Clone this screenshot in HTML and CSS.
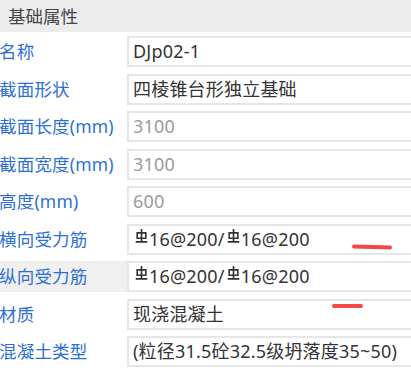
FILE: index.html
```html
<!DOCTYPE html>
<html lang="zh-CN">
<head>
  <meta charset="UTF-8">
  <meta name="viewport" content="width=device-width, initial-scale=1.0">
  <title>基础属性</title>
  <link rel="stylesheet" href="styles.css">
</head>
<body>
  <div class="panel">
    <div class="panel-title">基础属性</div>

    <div class="prop-list">
      <div class="prop-row">
        <div class="prop-name">名称</div>
        <div class="prop-value">DJp02-1</div>
      </div>
      <div class="prop-row">
        <div class="prop-name">截面形状</div>
        <div class="prop-value">四棱锥台形独立基础</div>
      </div>
      <div class="prop-row">
        <div class="prop-name">截面长度(mm)</div>
        <div class="prop-value prop-value--disabled">3100</div>
      </div>
      <div class="prop-row">
        <div class="prop-name">截面宽度(mm)</div>
        <div class="prop-value prop-value--disabled">3100</div>
      </div>
      <div class="prop-row">
        <div class="prop-name">高度(mm)</div>
        <div class="prop-value prop-value--disabled">600</div>
      </div>
      <div class="prop-row">
        <div class="prop-name">横向受力筋</div>
        <div class="prop-value"><svg class="rebar" viewBox="0 0 12 13"><path d="M6 0V12.5M2 3.6H10V8.6H2ZM0.6 12H11.4"/></svg>16@200/<svg class="rebar" viewBox="0 0 12 13"><path d="M6 0V12.5M2 3.6H10V8.6H2ZM0.6 12H11.4"/></svg>16@200</div>
      </div>
      <div class="prop-row prop-row--active">
        <div class="prop-name">纵向受力筋</div>
        <div class="prop-value"><svg class="rebar" viewBox="0 0 12 13"><path d="M6 0V12.5M2 3.6H10V8.6H2ZM0.6 12H11.4"/></svg>16@200/<svg class="rebar" viewBox="0 0 12 13"><path d="M6 0V12.5M2 3.6H10V8.6H2ZM0.6 12H11.4"/></svg>16@200</div>
      </div>
      <div class="prop-row">
        <div class="prop-name">材质</div>
        <div class="prop-value">现浇混凝土</div>
      </div>
      <div class="prop-row">
        <div class="prop-name">混凝土类型</div>
        <div class="prop-value">(粒径31.5砼32.5级坍落度35~50)</div>
      </div>
    </div>

    <span class="mark mark--first"></span>
    <span class="mark mark--second"></span>
  </div>
</body>
</html>
```

FILE: styles.css
```css
body {
  margin: 0;
  padding: 0;
  background: #fff;
  font-family: "Noto Sans", "Noto Sans CJK SC", sans-serif;
  font-size: 17.5px;
  overflow: hidden;
}

.panel {
  position: relative;
  width: 411px;
  height: 374px;
  overflow: hidden;
}

.panel-title {
  height: 32px;
  line-height: 32px;
  padding-left: 8px;
  background: #ececec;
  color: #444;
}

.prop-row {
  display: grid;
  grid-template-columns: 127px 1fr;
  height: 37.5px;
  padding-top: 4px;
  box-sizing: border-box;
}

.prop-name {
  height: 31px;
  line-height: 31px;
  margin-left: -1px;
  color: #2c70d6;
  letter-spacing: 0.2px;
  white-space: nowrap;
}

.prop-row--active .prop-name {
  background: #f0f0f0;
}

.prop-value {
  height: 31px;
  line-height: 27px;
  box-sizing: border-box;
  border: 2px solid #e6e6e6;
  border-right: none;
  margin-right: -10px;
  padding-left: 4px;
  color: #333;
  background: #fff;
  font-size: 18px;
  letter-spacing: 0.2px;
  white-space: nowrap;
}

.prop-value--disabled {
  color: #9a9a9a;
}

.rebar {
  width: 13px;
  height: 14px;
  margin: 0 1px 0 2px;
  vertical-align: 3px;
  fill: none;
  stroke: #333;
  stroke-width: 1.5;
}

.mark {
  position: absolute;
  height: 4px;
  border-radius: 2px;
  background: #f24848;
}

.mark--first {
  left: 352px;
  top: 245px;
  width: 40px;
  transform: rotate(1.5deg);
}

.mark--second {
  left: 332px;
  top: 304px;
  width: 31px;
}
```
